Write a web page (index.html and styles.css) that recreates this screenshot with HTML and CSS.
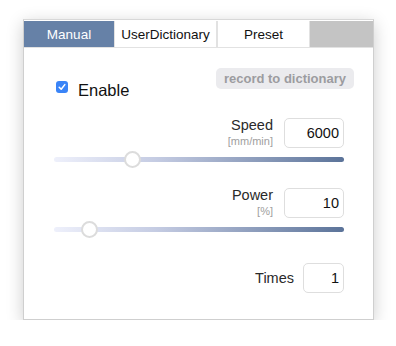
FILE: index.html
```html
<!DOCTYPE html>
<html>
<head>
<meta charset="utf-8">
<link rel="stylesheet" href="styles.css">
</head>
<body>
<div class="panel">
  <div class="tabs">
    <div class="tab tab-active tab-manual">Manual</div>
    <div class="tab tab-dict">UserDictionary</div>
    <div class="tab tab-preset">Preset</div>
    <div class="tab-fill"></div>
  </div>
  <div class="content">
    <div class="row-top">
      <label class="enable">
        <span class="check"><svg width="12" height="12" viewBox="0 0 12 12"><path d="M3.2 6.2 L5.2 8.3 L8.8 3.6" fill="none" stroke="#fff" stroke-width="1.5" stroke-linecap="round" stroke-linejoin="round"/></svg></span>
        <span class="enable-text">Enable</span>
      </label>
      <div class="record">record to dictionary</div>
    </div>
    <div class="param-row row-speed">
      <div class="label-block">
        <div class="label-main">Speed</div>
        <div class="label-unit">[mm/min]</div>
      </div>
      <div class="num-box">6000</div>
    </div>
    <input class="slider" type="range" min="0" max="10000" value="2555">
    <div class="param-row row-power">
      <div class="label-block">
        <div class="label-main">Power</div>
        <div class="label-unit">[%]</div>
      </div>
      <div class="num-box">10</div>
    </div>
    <input class="slider" type="range" min="0" max="100" value="10">
    <div class="times-row">
      <div class="times-label">Times</div>
      <div class="num-box num-small">1</div>
    </div>
  </div>
</div>
</body>
</html>
```
FILE: styles.css
```css
html, body {
  margin: 0;
  padding: 0;
  background: #ffffff;
}
body {
  font-family: "Liberation Sans", Arial, sans-serif;
  color: #222;
}
.panel {
  box-sizing: border-box;
  margin: 19px 0 0 23px;
  width: 351px;
  height: 301px;
  border: 1px solid #cfcfcf;
  border-top-color: #d8d8d8;
  padding-top: 1px;
  background: #fff;
  box-shadow: 0 4px 16px rgba(0, 0, 0, 0.2);
}
.tabs {
  display: flex;
  height: 26px;
  background: #e2e2e2;
  border-bottom: 1px solid #e2e2e2;
  gap: 1px;
}
.tab {
  display: flex;
  align-items: center;
  justify-content: center;
  font-size: 13.5px;
  background: #fff;
  color: #111;
}
.tab-manual {
  width: 90px;
}
.tab-active {
  background: #6681a7;
  color: #fff;
}
.tab-dict {
  width: 101px;
}
.tab-preset {
  width: 91px;
  margin-left: 1px;
}
.tab-fill {
  flex: 1;
  background: #c4c4c4;
}
.content {
  padding: 20px 29px 0 30px;
}
.row-top {
  display: flex;
  justify-content: space-between;
  align-items: flex-start;
}
.enable {
  display: flex;
  align-items: flex-start;
  margin-top: 12px;
  margin-left: 2px;
  line-height: 20px;
  font-size: 16.5px;
  color: #111;
}
.check {
  width: 12px;
  height: 12px;
  margin-top: 1px;
  border-radius: 3px;
  background: #3a84f7;
  display: block;
}
.check svg {
  display: block;
}
.enable-text {
  margin-left: 10px;
}
.record {
  margin-right: -10px;
  height: 21px;
  line-height: 21px;
  padding: 0 8px;
  border-radius: 5px;
  background: #ebebee;
  color: #9c9ca0;
  font-size: 13px;
  font-weight: bold;
}
.param-row {
  display: flex;
  justify-content: flex-end;
  align-items: flex-start;
  gap: 11px;
}
.row-speed {
  margin-top: 18px;
}
.row-power {
  margin-top: 21px;
}
.label-block {
  margin-top: -1px;
  text-align: right;
}
.label-main {
  font-size: 14.5px;
  line-height: 16px;
  color: #2a2a2a;
}
.label-unit {
  margin-top: 2px;
  font-size: 11px;
  line-height: 12px;
  color: #a0a0a0;
}
.num-box {
  box-sizing: border-box;
  width: 60px;
  height: 30px;
  border: 1px solid #dedede;
  border-radius: 5px;
  font-size: 14.5px;
  line-height: 28px;
  text-align: right;
  padding-right: 4px;
  color: #111;
}
.num-small {
  width: 41px;
}
.slider {
  -webkit-appearance: none;
  appearance: none;
  display: block;
  width: 290px;
  height: 16px;
  margin: 3px 0 0 0;
  padding: 0;
  background: transparent;
}
.slider::-webkit-slider-runnable-track {
  height: 5px;
  border-radius: 3px;
  background: linear-gradient(to right, #eef0fb, #c5cce3 35%, #5b7399);
}
.slider::-webkit-slider-thumb {
  -webkit-appearance: none;
  appearance: none;
  box-sizing: border-box;
  width: 17px;
  height: 17px;
  margin-top: -6px;
  border-radius: 50%;
  background: #fff;
  border: 2px solid #dcdcdc;
}
.times-row {
  display: flex;
  justify-content: flex-end;
  align-items: center;
  gap: 9px;
  margin-top: 26px;
}
.times-label {
  font-size: 14.5px;
  color: #2a2a2a;
}
```
